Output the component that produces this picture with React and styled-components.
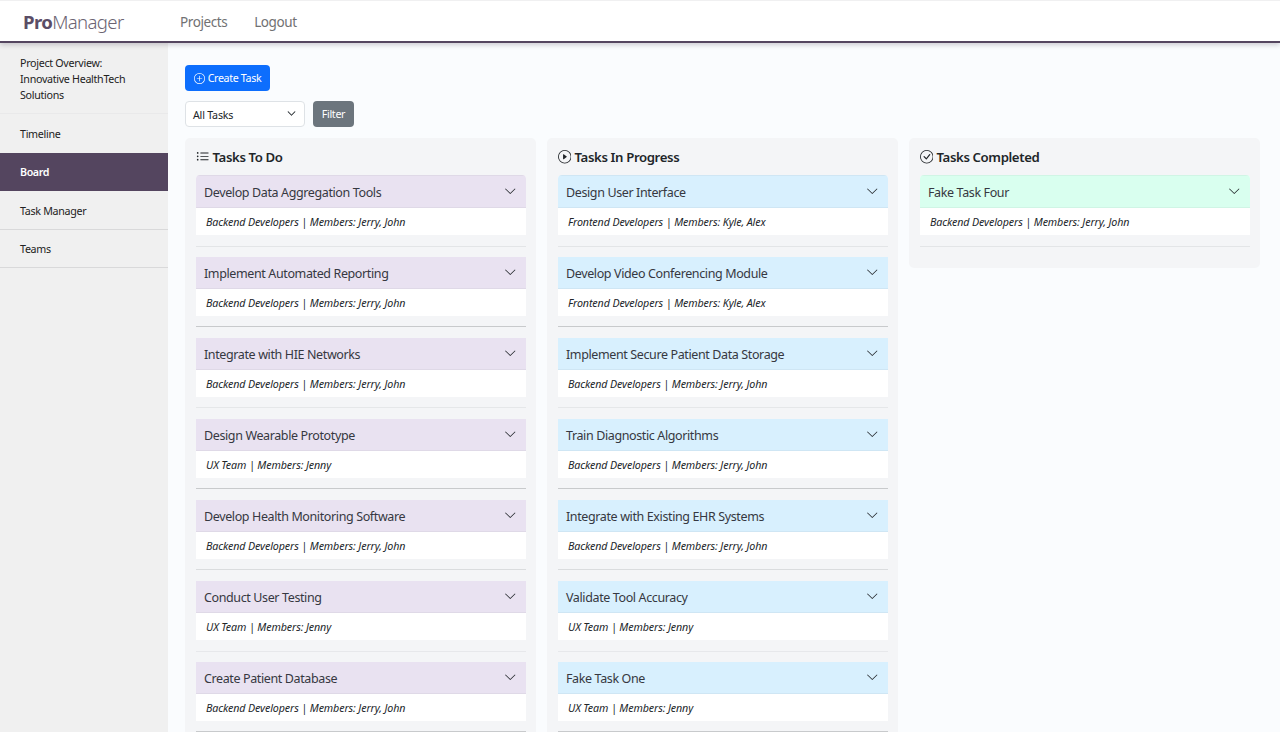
import React from "react";
import styled, { createGlobalStyle } from "styled-components";
import { BsPlusCircle, BsListUl, BsPlayCircle, BsCheckCircle, BsChevronDown } from "react-icons/bs";

const GlobalStyle = createGlobalStyle`
  *, *::before, *::after { box-sizing: border-box; }
  html, body { margin: 0; height: 100%; overflow: hidden; }
  body { font-family: "Noto Sans", "Open Sans", sans-serif; color: #212529; background: #fafcfe; }
`;

const Page = styled.div`
  height: 732px;
  display: flex;
  flex-direction: column;
  overflow: hidden;
`;

const Navbar = styled.header`
  position: relative;
  z-index: 1;
  flex: none;
  height: 43px;
  display: flex;
  align-items: center;
  padding: 1px 0 0 23px;
  background: #fff;
  border-top: 1px solid #f0f0f1;
  border-bottom: 2px solid #54455f;
  box-shadow: 0 2px 5px rgba(60, 50, 70, 0.24);
`;

const Brand = styled.div`
  width: 157px;
  font-size: 18.6px;
  line-height: 26px;
  font-weight: 300;
  letter-spacing: -0.65px;
  color: #6b6472;
  b { font-weight: 700; color: #5b4d66; }
`;

const NavLink = styled.a`
  font-size: 13.5px;
  line-height: 20px;
  letter-spacing: -0.42px;
  color: #717173;
  margin-right: 27px;
`;

const Body = styled.div`
  flex: 1;
  min-height: 0;
  display: flex;
`;

const Sidebar = styled.nav`
  flex: none;
  width: 168px;
  background: #f0f0f0;
`;

const SideItem = styled.a`
  display: flex;
  align-items: center;
  height: ${(p) => p.$height || "38.5px"};
  padding: 2px 30px 0 20px;
  font-size: 10.7px;
  line-height: 16.2px;
  letter-spacing: ${(p) => (p.$active ? "-0.4px" : "-0.3px")};
  font-weight: ${(p) => (p.$active ? 600 : 400)};
  color: ${(p) => (p.$active ? "#fff" : "#222")};
  background: ${(p) => (p.$active ? "#54455f" : "transparent")};
  border-bottom: 1px solid ${(p) => (p.$active ? "#54455f" : p.$line || "#d9d9da")};
`;

const Main = styled.main`
  flex: 1;
  min-width: 0;
  padding: 22px 20px 0 17px;
`;

const Button = styled.button`
  display: flex;
  align-items: center;
  justify-content: center;
  gap: 3px;
  width: ${(p) => p.$width};
  height: ${(p) => p.$height};
  padding: 0;
  border: 0;
  border-radius: 4px;
  font: 400 10.7px/16px "Noto Sans", "Open Sans", sans-serif;
  letter-spacing: -0.35px;
  color: #fff;
  background: ${(p) => p.$color};
`;

const Filters = styled.div`
  display: flex;
  gap: 8px;
  margin: 10px 0 11px;
`;

const Select = styled.div`
  width: 120px;
  height: 26px;
  display: flex;
  align-items: center;
  justify-content: space-between;
  padding: 1px 8px 0 7px;
  border: 1px solid #dee2e6;
  border-radius: 4px;
  background: #fff;
  font-size: 10.7px;
  letter-spacing: -0.22px;
  svg { width: 9px; height: 9px; margin-top: -2px; stroke: #343a40; stroke-width: 0.7px; }
`;

const Board = styled.div`
  display: grid;
  grid-template-columns: repeat(3, 1fr);
  gap: 11px;
  align-items: start;
`;

const Column = styled.section`
  padding: 9px 10.5px 11px;
  border-radius: 5px;
  background: #f4f5f7;
`;

const ColumnTitle = styled.h2`
  display: flex;
  align-items: center;
  gap: 3.5px;
  margin: 0 0 8px;
  height: 20px;
  font-size: 13.2px;
  line-height: 20px;
  font-weight: 600;
  letter-spacing: -0.38px;
  svg { flex: none; width: 13.5px; height: 13.5px; }
`;

const CardHeader = styled.div`
  height: 32px;
  display: flex;
  align-items: center;
  justify-content: space-between;
  padding: 1px 9px 0 8.5px;
  font-size: 12.5px;
  letter-spacing: -0.38px;
  color: #363841;
  background: ${(p) => p.$color};
  border-bottom: 1px solid rgba(0, 0, 0, 0.04);
  svg { width: 12.5px; height: 12.5px; margin-top: -1px; color: #212529; }
`;

const CardBody = styled.div`
  height: 27px;
  padding: 6px 10.5px 0;
  font-size: 10.7px;
  line-height: 16px;
  font-style: italic;
  letter-spacing: -0.11px;
`;

const Card = styled.article`
  overflow: hidden;
  background: #fff;

  &:first-of-type {
    border-radius: 4px 4px 0 0;
  }
  &:first-of-type ${CardHeader} {
    height: 33px;
    border-top: 1px solid rgba(0, 0, 0, 0.04);
  }
`;

const Divider = styled.hr`
  height: 1px;
  margin: ${(p) => (p.$low ? "11px 0 10px" : "10px 0 11px")};
  border: 0;
  background: ${(p) => p.$color};
`;

const dividers = [
  { color: "#e3e5e7", low: true },
  { color: "#c8cacc" },
  { color: "#e5e7e9" },
  { color: "#c8cacc" },
  { color: "#dadcde" },
  { color: "#e7e8eb", low: true },
  { color: "#c8cacc" },
];

const backend = "Backend Developers | Members: Jerry, John";
const frontend = "Frontend Developers | Members: Kyle, Alex";
const ux = "UX Team | Members: Jenny";

const columns = [
  {
    title: "Tasks To Do",
    icon: BsListUl,
    color: "#e9e2f1",
    tasks: [
      ["Develop Data Aggregation Tools", backend],
      ["Implement Automated Reporting", backend],
      ["Integrate with HIE Networks", backend],
      ["Design Wearable Prototype", ux],
      ["Develop Health Monitoring Software", backend],
      ["Conduct User Testing", ux],
      ["Create Patient Database", backend],
    ],
  },
  {
    title: "Tasks In Progress",
    icon: BsPlayCircle,
    color: "#d8f0fe",
    tasks: [
      ["Design User Interface", frontend],
      ["Develop Video Conferencing Module", frontend],
      ["Implement Secure Patient Data Storage", backend],
      ["Train Diagnostic Algorithms", backend],
      ["Integrate with Existing EHR Systems", backend],
      ["Validate Tool Accuracy", ux],
      ["Fake Task One", ux],
    ],
  },
  {
    title: "Tasks Completed",
    icon: BsCheckCircle,
    color: "#d9ffef",
    tasks: [["Fake Task Four", backend]],
  },
];

export default function App() {
  return (
    <Page>
      <GlobalStyle />
      <Navbar>
        <Brand><b>Pro</b>Manager</Brand>
        <NavLink>Projects</NavLink>
        <NavLink>Logout</NavLink>
      </Navbar>
      <Body>
        <Sidebar>
          <SideItem $height="71px" $line="#e9e9ea">Project Overview: Innovative HealthTech Solutions</SideItem>
          <SideItem $line="#f0f0f0">Timeline</SideItem>
          <SideItem $active>Board</SideItem>
          <SideItem>Task Manager</SideItem>
          <SideItem>Teams</SideItem>
        </Sidebar>
        <Main>
          <Button $width="85px" $height="26px" $color="#0d6efd"><BsPlusCircle size={11} />Create Task</Button>
          <Filters>
            <Select>All Tasks<BsChevronDown /></Select>
            <Button $width="41px" $height="26px" $color="#6c757d">Filter</Button>
          </Filters>
          <Board>
            {columns.map(({ title, icon: Icon, color, tasks }) => (
              <Column key={title}>
                <ColumnTitle><Icon />{title}</ColumnTitle>
                {tasks.map(([name, team], i) => (
                  <React.Fragment key={name}>
                    <Card>
                      <CardHeader $color={color}>{name}<BsChevronDown /></CardHeader>
                      <CardBody>{team}</CardBody>
                    </Card>
                    <Divider $color={dividers[i].color} $low={dividers[i].low} />
                  </React.Fragment>
                ))}
              </Column>
            ))}
          </Board>
        </Main>
      </Body>
    </Page>
  );
}
